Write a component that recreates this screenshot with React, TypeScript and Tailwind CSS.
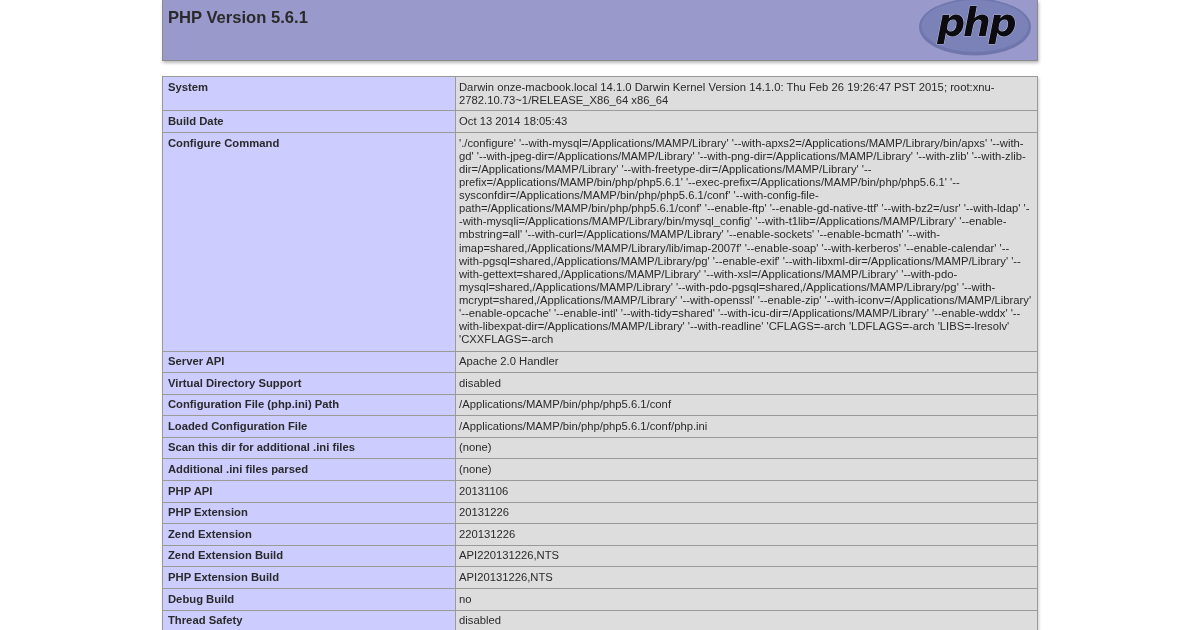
const rows: [string, string[], string][] = [
  ["System", ["Darwin onze-macbook.local 14.1.0 Darwin Kernel Version 14.1.0: Thu Feb 26 19:26:47 PST 2015; root:xnu-", "2782.10.73~1/RELEASE_X86_64 x86_64"], "h-[34px]"],
  ["Build Date", ["Oct 13 2014 18:05:43"], "h-[22px]"],
  ["Configure Command", [
    "'./configure' '--with-mysql=/Applications/MAMP/Library' '--with-apxs2=/Applications/MAMP/Library/bin/apxs' '--with-",
    "gd' '--with-jpeg-dir=/Applications/MAMP/Library' '--with-png-dir=/Applications/MAMP/Library' '--with-zlib' '--with-zlib-",
    "dir=/Applications/MAMP/Library' '--with-freetype-dir=/Applications/MAMP/Library' '--",
    "prefix=/Applications/MAMP/bin/php/php5.6.1' '--exec-prefix=/Applications/MAMP/bin/php/php5.6.1' '--",
    "sysconfdir=/Applications/MAMP/bin/php/php5.6.1/conf' '--with-config-file-",
    "path=/Applications/MAMP/bin/php/php5.6.1/conf' '--enable-ftp' '--enable-gd-native-ttf' '--with-bz2=/usr' '--with-ldap' '-",
    "-with-mysqli=/Applications/MAMP/Library/bin/mysql_config' '--with-t1lib=/Applications/MAMP/Library' '--enable-",
    "mbstring=all' '--with-curl=/Applications/MAMP/Library' '--enable-sockets' '--enable-bcmath' '--with-",
    "imap=shared,/Applications/MAMP/Library/lib/imap-2007f' '--enable-soap' '--with-kerberos' '--enable-calendar' '--",
    "with-pgsql=shared,/Applications/MAMP/Library/pg' '--enable-exif' '--with-libxml-dir=/Applications/MAMP/Library' '--",
    "with-gettext=shared,/Applications/MAMP/Library' '--with-xsl=/Applications/MAMP/Library' '--with-pdo-",
    "mysql=shared,/Applications/MAMP/Library' '--with-pdo-pgsql=shared,/Applications/MAMP/Library/pg' '--with-",
    "mcrypt=shared,/Applications/MAMP/Library' '--with-openssl' '--enable-zip' '--with-iconv=/Applications/MAMP/Library'",
    "'--enable-opcache' '--enable-intl' '--with-tidy=shared' '--with-icu-dir=/Applications/MAMP/Library' '--enable-wddx' '--",
    "with-libexpat-dir=/Applications/MAMP/Library' '--with-readline' 'CFLAGS=-arch 'LDFLAGS=-arch 'LIBS=-lresolv'",
    "'CXXFLAGS=-arch",
  ], "h-[218.5px]"],
  ["Server API", ["Apache 2.0 Handler"], "h-[21.6px]"],
  ["Virtual Directory Support", ["disabled"], "h-[21.6px]"],
  ["Configuration File (php.ini) Path", ["/Applications/MAMP/bin/php/php5.6.1/conf"], "h-[21.6px]"],
  ["Loaded Configuration File", ["/Applications/MAMP/bin/php/php5.6.1/conf/php.ini"], "h-[21.6px]"],
  ["Scan this dir for additional .ini files", ["(none)"], "h-[21.6px]"],
  ["Additional .ini files parsed", ["(none)"], "h-[21.6px]"],
  ["PHP API", ["20131106"], "h-[21.6px]"],
  ["PHP Extension", ["20131226"], "h-[21.6px]"],
  ["Zend Extension", ["220131226"], "h-[21.6px]"],
  ["Zend Extension Build", ["API220131226,NTS"], "h-[21.6px]"],
  ["PHP Extension Build", ["API20131226,NTS"], "h-[21.6px]"],
  ["Debug Build", ["no"], "h-[21.6px]"],
  ["Thread Safety", ["disabled"], "h-[21.6px]"],
];

export default function App() {
  return (
    <div className="h-[630px] w-[1200px] overflow-hidden bg-white font-['Liberation_Sans',Arial,sans-serif] text-[#2a2a2a]">
      <div className="ml-[162px] flex w-[876px] flex-col [filter:blur(0.7px)]">
        <div className="flex h-[61px] items-start justify-between border-x border-b border-[#8a8a8a] bg-[#9999cc] pl-[5px] pr-[4px] shadow-[1px_2px_3px_#bbb]">
          <h1 className="mt-[8px] text-[16.6px] leading-[19px] font-bold text-[#2a2a2a]">PHP Version 5.6.1</h1>
          <svg width="116" height="60" viewBox="0 0 116 60" className="shrink-0">
            <ellipse cx="58" cy="27" rx="56" ry="28.5" fill="#6f76ac" />
            <ellipse cx="58" cy="26" rx="53.5" ry="26" fill="#7b82b8" />
            <text x="59" y="36" textAnchor="middle" fontFamily="'DejaVu Sans',sans-serif" fontStyle="italic" fontWeight="700" fontSize="39" letterSpacing="-2" fill="#0c0c10" stroke="#d5d6ea" strokeWidth="0.7" paintOrder="stroke">php</text>
          </svg>
        </div>
        <div className="mt-[15px] flex flex-col border-x border-t border-[#9a9a9a] shadow-[1px_2px_3px_#ccc]">
          {rows.map(([label, lines, height]) => (
            <div key={label} className={`flex border-b border-[#9a9a9a] ${height}`}>
              <div className="w-[293px] shrink-0 border-r border-[#9a9a9a] bg-[#ccccff] pl-[5px] pt-[3.5px] text-[11.25px] leading-[13.13px] font-bold whitespace-nowrap">{label}</div>
              <div className="min-w-0 flex-1 bg-[#dddddd] pl-[3px] pt-[3.5px] text-[11.25px] leading-[13.13px] whitespace-nowrap">
                {lines.map((line) => <div key={line}>{line}</div>)}
              </div>
            </div>
          ))}
        </div>
      </div>
    </div>
  );
}
